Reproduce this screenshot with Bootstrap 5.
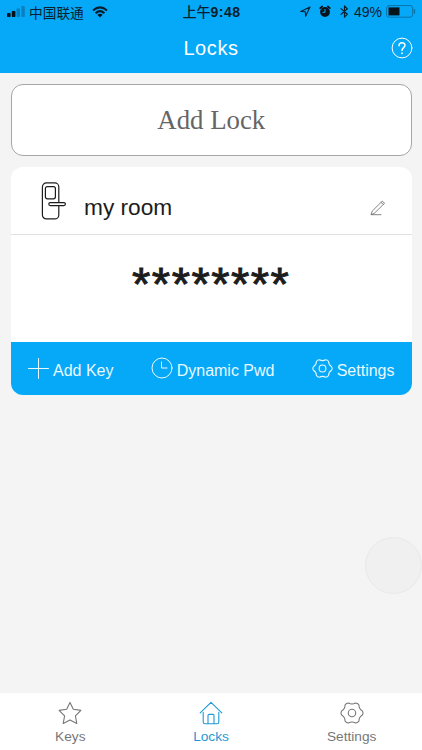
<!DOCTYPE html>
<html lang="en">
<head>
<meta charset="utf-8">
<meta name="viewport" content="width=device-width, initial-scale=1">
<title>Locks</title>
<link href="https://cdn.jsdelivr.net/npm/bootstrap@5.3.0/dist/css/bootstrap.min.css" rel="stylesheet">
<style>
  body { font-family: "Liberation Sans", Arial, sans-serif; background: #f4f4f4; color: #1c1c1c; line-height: 1.2; }
  .app { width: 422px; height: 750px; }
  svg { display: block; flex: none; fill: none; stroke: currentColor; stroke-linejoin: round; stroke-linecap: round; }
  .topbar { height: 73px; background: #06a8f8; }
  .status { height: 24px; color: #06202f; font-size: 14px; padding: 0 6px 0 7px; }
  .status > div { flex: 1 1 0; }
  .carrier { font: 13.7px "Noto Sans CJK SC", sans-serif; line-height: 22px; }
  .clock { font: 500 14px "Liberation Sans", "Noto Sans CJK SC", sans-serif; line-height: 22px; }
  .clock b { letter-spacing: .5px; }
  .wave { stroke-linecap: butt; }
  .titlebar { height: 49px; }
  .titlebar h1 { font-size: 20px; letter-spacing: .6px; font-weight: 400; padding-bottom: 2px; }
  .side { width: 31px; }
  .help { padding-bottom: 2px; }
  .content { padding: 11px 10.5px 0 11px; gap: 11px; }
  .add-lock { height: 72px; border: 1px solid #a6a6a6; border-radius: 12px; background: #fff; color: #656565; font: 26.8px "Liberation Serif", serif; padding: 0; }
  .lock-card { border-radius: 12px; height: 227.5px; background: #fff; }
  .lock-head { height: 68px; border-bottom: 1px solid #e2e2e2; padding: 0 26px 0 30px; }
  .lock-name { font-size: 22.7px; padding: 15px 0 0 17px; }
  .edit { padding-top: 14px; color: #777; }
  .code { font-size: 47px; letter-spacing: 1.5px; height: 107px; line-height: 55px; padding-top: 21px; -webkit-text-stroke: .9px #1c1c1c; }
  .actions { height: 52.5px; background: #06a8f8; color: #e9f9ff; font-size: 16px; padding: 0 17px; }
  .actions span { padding-top: 5px; }
  .tabbar { height: 57px; background: #fff; color: #777; font-size: 13.7px; }
  .tabbar a { color: inherit; padding-top: 8px; gap: 4px; }
  .tabbar a.current { color: #1f98d4; }
  .assist { left: 365px; top: 536.5px; width: 57px; height: 57px; background: #f0f0f0; border: 1px solid #e9e9e9; }
</style>
<script src="https://cdn.jsdelivr.net/npm/bootstrap@5.3.0/dist/js/bootstrap.bundle.min.js"></script>
</head>
<body>
<div class="app d-flex flex-column position-relative overflow-hidden">
  <header class="topbar">
    <div class="status d-flex align-items-center">
      <div class="d-flex align-items-center">
        <svg width="18" height="12" viewBox="0 0 18 12"><g fill="#06131b" stroke="none"><rect x="0" y="7" width="3.6" height="4" rx=".7"/><rect x="4.8" y="5" width="3.6" height="6" rx=".7"/></g><g fill="#0780bd" stroke="none"><rect x="9.6" y="2.6" width="3.4" height="8.4" rx=".7"/><rect x="14.4" y="0" width="3.4" height="11" rx=".7"/></g></svg>
        <span class="carrier ps-1">中国联通</span>
        <svg class="ms-2" width="16" height="12" viewBox="0 0 16 12" stroke="#06131b" stroke-width="2.1"><path class="wave" d="M1 4.5Q8-1.7 15 4.5M3.6 7.2Q8 3.2 12.4 7.2"/><path d="M5.4 8.8Q8 6.5 10.6 8.8L8 11.4Z" fill="#06131b" stroke="none"/></svg>
      </div>
      <div class="clock text-center text-nowrap">上午<b>9:48</b></div>
      <div class="d-flex align-items-center justify-content-end">
        <svg width="11" height="11" viewBox="0 0 11 11" stroke="#06131b" stroke-width="1.1"><path d="M.8 5.5 10 1 5.6 10.2 5.3 5.8Z"/></svg>
        <svg class="ms-2" width="12" height="13" viewBox="0 0 12 13"><g fill="#06131b" stroke="none"><circle cx="6" cy="7" r="4.9"/></g><path d="M1.2 3.2 3.2 1.5M10.8 3.2 8.8 1.5" stroke="#06131b" stroke-width="1.7"/><path d="M6 4.4V7.3H3.8" stroke="#06a8f8" stroke-width="1"/></svg>
        <svg class="ms-2" width="11" height="13" viewBox="0 0 11 13" stroke="#06131b" stroke-width="1.2"><path d="M2 3.6 8.4 9.2 5.5 12.2V.8L8.4 3.8 2 9.4"/></svg>
        <span class="ps-1">49%</span>
        <svg class="ms-1" width="30" height="13" viewBox="0 0 30 13"><rect x=".6" y=".6" width="26" height="11.6" rx="2.4" stroke="#0774a8" stroke-width="1"/><rect x="2.5" y="2.4" width="11" height="8" fill="#06131b" stroke="none"/><path d="M28.4 4.8v3.2" stroke="#0774a8" stroke-width="1.4"/></svg>
      </div>
    </div>
    <div class="titlebar d-flex align-items-center justify-content-between text-white">
      <span class="side"></span>
      <h1 class="m-0">Locks</h1>
      <span class="side help"><svg width="22" height="22" viewBox="0 0 22 22" stroke-width="1"><circle cx="11" cy="11" r="9.9"/><path d="M8 8.7C8 4.7 14 4.8 14 8.3 14 10.6 11 10.7 11 13.4" stroke-width="1.4"/><path d="M11 16v.3" stroke-width="1.7"/></svg></span>
    </div>
  </header>

  <main class="content d-flex flex-column flex-grow-1">
    <button class="add-lock w-100" type="button">Add Lock</button>
    <section class="lock-card overflow-hidden d-flex flex-column">
      <div class="lock-head d-flex align-items-center">
        <svg width="26" height="38" viewBox="0 0 26 38" stroke="#444" stroke-width="1.2"><rect x="1.4" y=".9" width="16.4" height="36" rx="4"/><rect x="4.4" y="4.6" width="10" height="12.2" rx="2"/><rect x="7.8" y="20.6" width="16.6" height="3" rx="1.5" fill="#fff"/></svg>
        <span class="lock-name flex-grow-1">my room</span>
        <span class="edit"><svg width="16" height="16" viewBox="0 0 16 16" stroke-width=".9"><path d="M1.2 14.2 2.3 11 12.2 1.2 14.6 3.2 4.4 13.2ZM11 2.4 13.4 4.4M1.2 14.7H11"/></svg></span>
      </div>
      <div class="code text-center">********</div>
      <div class="actions d-flex align-items-center justify-content-between">
        <div class="d-flex align-items-center"><svg width="21" height="21" viewBox="0 0 21 21" stroke-width="1"><path d="M.5 10.5h20M10.5.5v20"/></svg><span class="ps-1">Add Key</span></div>
        <div class="d-flex align-items-center"><svg width="22" height="22" viewBox="0 0 22 22" stroke-width="1"><circle cx="11" cy="11" r="10"/><path d="M10.5 5v6h5.5"/></svg><span class="ps-1">Dynamic Pwd</span></div>
        <div class="d-flex align-items-center"><svg width="21" height="21" viewBox="0 0 24 24" stroke-width="1.2"><path id="gear" d="M22.4 10Q23.6 12 22.4 14 18.9 16 18.95 20 17.8 22 15.45 22 12 20 8.55 22 6.2 22 5.05 20 5.1 16 1.6 14 .4 12 1.6 10 5.1 8 5.05 4 6.2 2 8.55 2 12 4 15.45 2 17.8 2 18.95 4 18.9 8 22.4 10Z"/><circle cx="12" cy="12" r="3.9"/></svg><span class="ps-1">Settings</span></div>
      </div>
    </section>
  </main>

  <nav class="tabbar d-flex">
    <a class="d-flex flex-column align-items-center text-decoration-none w-100" href="#"><svg width="24" height="24" viewBox="0 0 24 24" stroke-width="1.1"><path d="M12 1.4 15.3 8.3 22.9 9.4 17.4 14.8 18.8 22.5 12 18.9 5.2 22.5 6.6 14.8 1.1 9.4 8.7 8.3Z"/></svg>Keys</a>
    <a class="current d-flex flex-column align-items-center text-decoration-none w-100" href="#"><svg width="24" height="24" viewBox="0 0 24 24" stroke-width="1.1"><path d="M1.2 11.8 12 1.3 22.8 11.8M4.2 11.2V21Q4.2 22.8 6 22.8H18Q19.8 22.8 19.8 21V11.2M9 22.8V14.6Q9 13.4 10.2 13.4H13.8Q15 13.4 15 14.6V22.8"/></svg>Locks</a>
    <a class="d-flex flex-column align-items-center text-decoration-none w-100" href="#"><svg width="24" height="24" viewBox="0 0 24 24" stroke-width="1.1"><use href="#gear"/><circle cx="12" cy="12" r="3.7"/></svg>Settings</a>
  </nav>

  <div class="assist position-absolute rounded-circle"></div>
</div>
</body>
</html>
